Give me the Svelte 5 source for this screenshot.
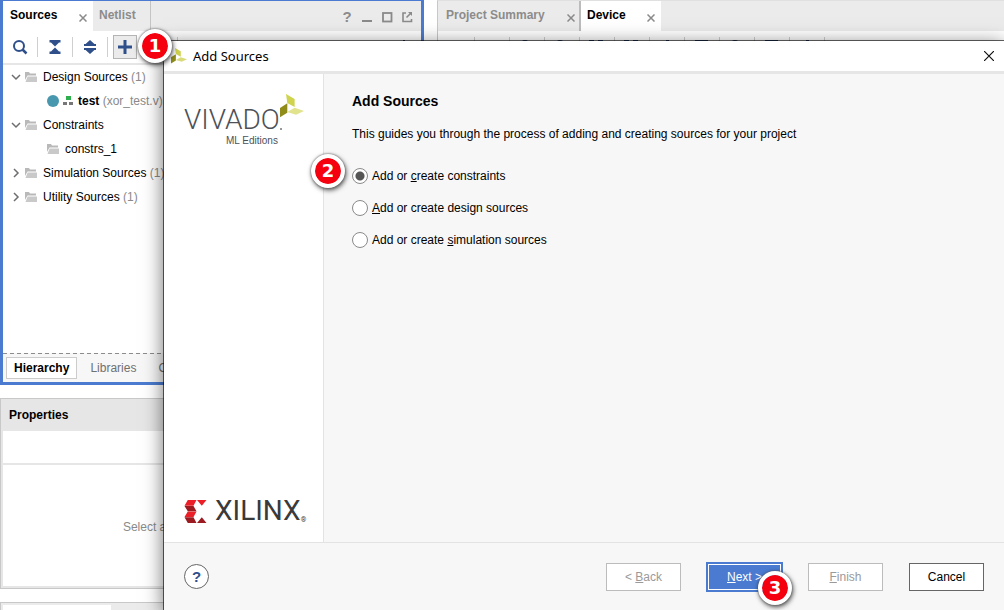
<script>
  let choice = $state('constraints');

  const options = [
    { id: 'constraints', before: 'Add or ', key: 'c', after: 'reate constraints', step: 2 },
    { id: 'design', before: '', key: 'A', after: 'dd or create design sources' },
    { id: 'simulation', before: 'Add or create ', key: 's', after: 'imulation sources' }
  ];

  const deviceTools = ['', '', 'arc', 'arc', 'pair', 'pair', 'dot', 'wide', 'arc', 'wide', 'dot'];
</script>

{#snippet folder()}
  <svg class="folder" width="12" height="11" viewBox="0 0 12 11">
    <path d="M0 0h4l1 1.500h6V3.500H2.500L0 8z" fill="#b9b9b9" />
    <path d="M2.600 4.500H12V10H0.500z" fill="#c9c9c9" />
  </svg>
{/snippet}

{#snippet chevron(open)}
  <svg class="chevron" width="10" height="10" viewBox="0 0 10 10" fill="none" stroke="#6e6e6e" stroke-width="1.500">
    <path d={open ? 'M1 3l4 4 4-4' : 'M3 1l4 4-4 4'} />
  </svg>
{/snippet}

{#snippet cross()}
  <svg width="8" height="8" viewBox="0 0 8 8" stroke="#8a8a8a" stroke-width="1.500"><path d="M.5.5l7 7M7.500.5l-7 7" /></svg>
{/snippet}

<div class="app">
  <main class="workspace">
    <div class="column">
      <section class="panel sources">
        <header class="tabs">
          <div class="tab active"><span>Sources</span><button class="bare" aria-label="Close Sources">{@render cross()}</button></div>
          <button class="tab netlist">Netlist</button>
          <div class="window-tools">
            <button class="bare help-mark" aria-label="Help">?</button>
            <button class="bare" aria-label="Minimize"><svg width="12" height="12"><path d="M1 10h10" stroke="#8a8a8a" stroke-width="2" /></svg></button>
            <button class="bare" aria-label="Maximize"><svg width="12" height="12"><rect x="2" y="2" width="8.500" height="8.500" fill="none" stroke="#8a8a8a" stroke-width="1.800" /></svg></button>
            <button class="bare" aria-label="Float"><svg width="12" height="12" fill="none" stroke="#8a8a8a" stroke-width="1.600"><path d="M5 2H2v8.500h8.500V8M5.500 6.500l4-4" /><path d="M7 1h4v4z" fill="#8a8a8a" stroke="none" /></svg></button>
          </div>
        </header>
        <div class="toolbar">
          <button class="tool" aria-label="Search"><svg width="16" height="16" fill="none" stroke="#2f4f8b"><circle cx="7" cy="7" r="5" stroke-width="2" /><path d="M10.500 10.500l4 4" stroke-width="2.500" /></svg></button>
          <button class="tool" aria-label="Collapse all"><svg width="16" height="16" fill="#2f4f8b"><path d="M2.500 1h11v2.500h-11zM4 3.500h8L8 7.500zM8 8.500l4 4H4zM2.500 12.500h11V15h-11z" /></svg></button>
          <button class="tool" aria-label="Expand all"><svg width="16" height="16" fill="#2f4f8b"><path d="M8 1l5 4.500H3zM2 5h12v2H2zM2 9h12v2H2zM3 10.500h10L8 15z" /></svg></button>
          <button class="tool" aria-label="Add sources"><span class="pressed"><svg width="16" height="16"><path d="M8 1v14M1 8h14" stroke="#2f4f8b" stroke-width="3" /></svg></span></button>
          <button class="tool" aria-label="Refresh"></button>
          <button class="tool gear" aria-label="Settings"><svg width="14" height="14"><path d="M6 0h2v3H6z" fill="#2f4f8b" /><circle cx="7" cy="7" r="4" fill="none" stroke="#2f4f8b" stroke-width="2" /></svg></button>
        </div>
        <ul class="tree">
          <li>{@render chevron(true)}{@render folder()}<span>Design Sources <i>(1)</i></span></li>
          <li class="file">
            <svg width="12" height="12"><circle cx="6" cy="6" r="6" fill="#4797ae" /></svg>
            <svg width="11" height="10"><path d="M3 0h5v4H3z" fill="#2fae4e" /><path d="M0 6h4v3H0zM6 6h4v3H6z" fill="#777" /></svg>
            <span><b>test</b> <i>(xor_test.v)</i></span>
          </li>
          <li>{@render chevron(true)}{@render folder()}<span>Constraints</span></li>
          <li class="child">{@render folder()}<span>constrs_1</span></li>
          <li>{@render chevron(false)}{@render folder()}<span>Simulation Sources <i>(1)</i></span></li>
          <li>{@render chevron(false)}{@render folder()}<span>Utility Sources <i>(1)</i></span></li>
        </ul>
        <nav class="views">
          <button class="view current">Hierarchy</button>
          <button class="view">Libraries</button>
          <button class="view">Compile Order</button>
        </nav>
      </section>

      <section class="panel properties">
        <h2>Properties</h2>
        <div class="strip"></div>
        <p>Select an object to see properties</p>
      </section>

      <section class="panel console"><div class="console-tab"></div></section>
    </div>

    <section class="panel device">
      <header class="tabs">
        <div class="tab summary"><span>Project Summary</span><button class="bare" aria-label="Close Project Summary">{@render cross()}</button></div>
        <div class="tab active chip"><span>Device</span><button class="bare" aria-label="Close Device">{@render cross()}</button></div>
      </header>
      <div class="toolbar">
        {#each deviceTools as kind}
          <span class="tool">
            <svg width="20" height="14" fill="#2f4f8b">
              {#if kind === 'arc'}<circle cx="8" cy="5" r="5" />
              {:else if kind === 'pair'}<path d="M2 0h5v5H2zM11 0h5v5h-5z" />
              {:else if kind === 'wide'}<path d="M3 0h13v3H3z" />
              {:else if kind === 'dot'}<path d="M9 0h3v4H9z" />{/if}
            </svg>
          </span>
        {/each}
      </div>
    </section>
  </main>

  <span class="badge on-add">1</span>

  <div class="dialog" role="dialog" aria-labelledby="dialog-title">
    <header class="titlebar">
      <svg width="16" height="16" viewBox="0 0 24 24">
        <path d="M6 0l8.600 5v8L7.300 9z" fill="#cdd04a" /><path d="M0 14l7.300-4.700v9.400L0 23.300z" fill="#8f8c1a" /><path d="M7.300 18l7.300-4.300L24 17l-8 3.700z" fill="#d9da78" />
      </svg>
      <span id="dialog-title">Add Sources</span>
      <button class="bare" aria-label="Close"><svg width="10" height="10" stroke="#111" stroke-width="1.200"><path d="M0 0l10 10M10 0L0 10" /></svg></button>
    </header>

    <div class="body">
      <aside>
        <div class="vivado">
          <div class="wordmark"><span>VIVADO</span>
            <svg width="24" height="36" viewBox="0 0 24 36">
              <path d="M6 0l8.600 5v8L7.300 9z" fill="#cfd34d" /><path d="M0 14l7.300-4.700v9.400L0 23.300z" fill="#8f8c1a" /><path d="M7.300 18l7.300-4.300L24 17l-8 3.700z" fill="#e2e38d" />
              <circle cx="1" cy="35" r="1" fill="#777" />
            </svg>
          </div>
          <div class="edition">ML Editions</div>
        </div>
        <div class="xilinx">
          <svg width="23" height="23" viewBox="0 0 22 23">
            <path d="M3.300 0H12L9 5.700H0zM12.500 0H22l-4.700 5.700zM3.300 11.500H12L9 17H0z" fill="#ea1f27" />
            <path d="M0 6h9l3 5.300H3.300zM0 17.300h9l3 5.700H3.300zM12.500 23l4.800-5.700L22 23z" fill="#9b1b21" />
          </svg>
          <span>XILINX</span><small>®</small>
        </div>
      </aside>

      <form class="content">
        <h1>Add Sources</h1>
        <p>This guides you through the process of adding and creating sources for your project</p>
        {#each options as o}
          <div class="option">
            <input type="radio" id={o.id} name="kind" value={o.id} bind:group={choice} />
            <label for={o.id}>{o.before}<u>{o.key}</u>{o.after}</label>
            {#if o.step}<span class="badge on-option">{o.step}</span>{/if}
          </div>
        {/each}
      </form>
    </div>

    <footer>
      <button class="help" aria-label="Help">?</button>
      <button class="btn" disabled>&lt; <u>B</u>ack</button>
      <div class="anchor">
        <button class="btn primary"><u>N</u>ext &gt;</button>
        <span class="badge on-next">3</span>
      </div>
      <button class="btn" disabled><u>F</u>inish</button>
      <button class="btn cancel">Cancel</button>
    </footer>
  </div>
</div>

<style>
  .app {
    position: relative;
    height: 100vh;
    overflow: hidden;
    background: #fff;
    color: #000;
    font: 12px/16px "Liberation Sans", Arial, sans-serif;
  }
  .app * { box-sizing: border-box; }
  button { font: inherit; color: inherit; padding: 0; margin: 0; border: 0; background: none; }
  svg { display: block; flex: none; }
  h1, h2, p, ul { margin: 0; padding: 0; }

  .workspace { display: grid; grid-template-columns: 424px 1fr; gap: 13px; height: 100%; }
  .column { display: grid; grid-template-rows: 1fr 191px 8px; gap: 13px; min-height: 0; }
  .panel { display: flex; flex-direction: column; min-width: 0; min-height: 0; overflow: hidden; white-space: nowrap; }
  .sources { border: 3px solid #4a7bd0; border-top-width: 1px; }

  .tabs { display: flex; height: 30px; flex: none; background: #ebebeb; font-weight: bold; color: #8c8c8c; }
  .tab { display: flex; align-items: center; justify-content: space-between; padding: 0 6px 2px 7px; font-weight: bold; }
  .tab .bare { padding-top: 5px; }
  .active { width: 90px; background: #fff; color: #000; }
  .netlist { width: 58px; padding-left: 6px; border-right: 1px solid #c4c4c4; color: #8c8c8c; }
  .window-tools { display: flex; align-items: center; gap: 8px; margin-left: auto; padding: 2px 8px 0 0; }
  .help-mark { width: 12px; font-size: 15px; font-weight: bold; }
  .summary { width: 141px; border-right: 2px solid #bcbcbc; padding: 0 4px 2px 6px; }
  .chip { width: 80px; padding-left: 6px; }

  .toolbar { display: flex; align-items: center; height: 34px; flex: none; border-bottom: 2px solid #e6e6e6; }
  .tool { display: flex; align-items: center; justify-content: center; width: 35px; height: 20px; border-right: 1px solid #cfcfcf; }
  .tool.gear { margin-left: auto; border: 0; }
  .pressed { display: flex; align-items: center; justify-content: center; flex: none; width: 24px; height: 24px; border: 1px solid #b4b4b4; background: #ebebeb; }

  .tree { flex: 1; list-style: none; }
  .tree li { display: flex; align-items: center; gap: 4px; height: 24px; padding-left: 8px; }
  .tree .folder { margin: 0 2px 0 0; }
  .tree .child { padding-left: 44px; }
  .tree .file { padding-left: 44px; }
  .tree i { font-style: normal; color: #8a8a8a; }

  .views {
    display: flex;
    align-items: center;
    gap: 4px;
    height: 29px;
    flex: none;
    padding: 1px 3px 0;
    background: repeating-linear-gradient(90deg, #8c8c8c 0 4px, #f7f7f7 4px 7px) top / 100% 1px no-repeat #f7f7f7;
  }
  .view { padding: 2px 8px; border: 1px solid transparent; color: #707070; }
  .view.current { padding: 2px 7px; border-color: #ccc; background: #fff; color: #000; font-weight: bold; }

  .properties { border: 1px solid #c8c8c8; outline: 2px solid #e6e6e6; outline-offset: -3px; }
  .properties h2 { padding: 8px; font-size: 12px; line-height: 16px; background: #e6e6e6; }
  .strip { height: 34px; flex: none; border-bottom: 2px solid #e6e6e6; }
  .properties p { display: flex; flex: 1; align-items: center; justify-content: center; color: #8a8a8a; }
  .console { padding: 2px 0 0 2px; border: 1px solid #c8c8c8; background: #ebebeb; border-bottom: 0; }
  .console-tab { width: 108px; flex: 1; background: #fff; }
  .device { border-left: 1px solid #c8c8c8; border-top: 1px solid #e0e0e0; }
  .device .tabs { padding-left: 2px; }
  .device .toolbar { padding-left: 2px; }

  .dialog {
    position: absolute;
    inset: 40px 0 0 163px;
    display: flex;
    flex-direction: column;
    border: solid rgba(0, 0, 0, 0.6);
    border-width: 1px 0 0 1px;
    background: #f7f7f7;
    background-clip: padding-box;
    box-shadow: 0 4px 18px rgba(0, 0, 0, 0.55);
  }
  .titlebar { display: flex; align-items: center; gap: 6px; height: 33px; flex: none; padding: 0 10px 0 7px; border-bottom: 3px solid #e6e6e6; background: #fff; font: 13px/18px "Noto Sans", sans-serif; }
  .titlebar .bare { margin-left: auto; }
  .body { display: flex; flex: 1; min-height: 0; }
  aside { display: flex; flex-direction: column; justify-content: space-between; width: 160px; padding: 20px 20px 18px; border-right: 1px solid #e3e3e3; background: #fff; }
  .vivado { color: #4d5157; font-family: Roboto, sans-serif; }
  .wordmark { display: flex; align-items: flex-end; height: 42px; font-size: 28px; font-weight: 300; line-height: 32px; }
  .wordmark svg { align-self: flex-start; }
  .edition { padding-left: 42px; font: 10px/10px "Liberation Sans", sans-serif; }
  .xilinx { display: flex; align-items: center; color: #3a3a3a; font: 400 28px/26px Roboto, sans-serif; }
  .xilinx span { padding-left: 8px; }
  .xilinx small { align-self: flex-end; font-size: 7px; line-height: 8px; }

  .content { flex: 1; padding: 17px 28px; }
  h1 { font-size: 14px; line-height: 20px; }
  .content p { padding: 15px 0 18px; }
  .option { position: relative; display: flex; align-items: center; gap: 4px; height: 32px; }
  input { appearance: none; width: 16px; height: 16px; margin: 0; border: 1px solid #8a8a8a; border-radius: 50%; background: #fff; }
  input:checked { background: radial-gradient(circle, #555 4px, #fff 5px); }

  footer { display: flex; align-items: center; gap: 26px; height: 68px; flex: none; padding: 0 20px; border-top: 1px solid #e3e3e3; }
  .help { width: 25px; height: 25px; margin-right: auto; border: 1px solid #666; border-radius: 50%; background: #fff; color: #2f4f8b; font-size: 15px; font-weight: bold; }
  .btn { width: 75px; height: 28px; border: 1px solid #bcbcbc; background: #fff; }
  .btn:disabled { color: #9a9a9a; }
  .primary { border: 1px solid #4a7bd0; outline: 1px solid #4a7bd0; background: #4a7bd0; box-shadow: inset 0 0 0 1px #fff; color: #fff; }
  .cancel { border-color: #666; }
  .anchor { position: relative; }

  .badge {
    position: absolute;
    z-index: 2;
    display: flex;
    align-items: center;
    justify-content: center;
    width: 34px;
    height: 34px;
    border: 4px solid #fff;
    border-radius: 50%;
    background: #f5000f;
    background-clip: padding-box;
    box-shadow: 0 0 2px #555, 1px 2px 5px rgba(0, 0, 0, 0.7);
    color: #fff;
    font: bold 18px/24px "DejaVu Sans", sans-serif;
  }
  .on-add { left: 138px; top: 29px; }
  .on-option { left: -41px; top: -6px; }
  .on-next { right: -10px; bottom: -14px; }
</style>
